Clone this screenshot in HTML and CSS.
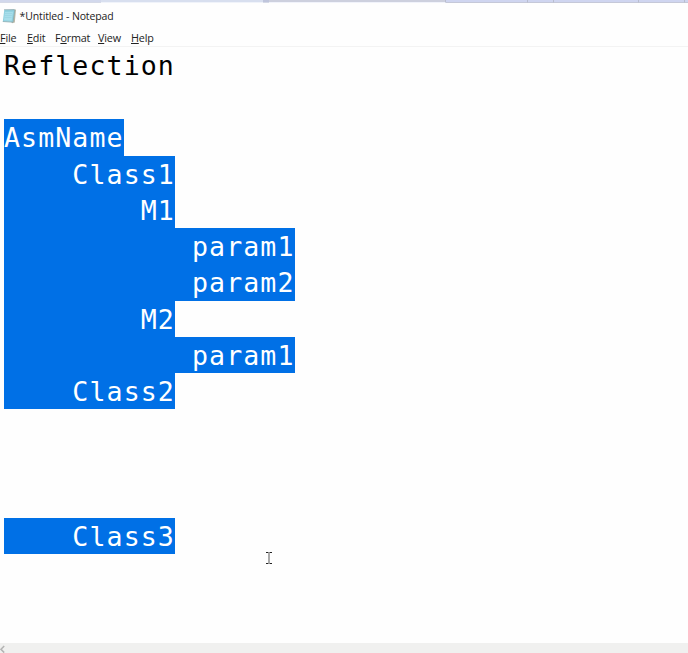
FILE: index.html
```
<!DOCTYPE html>
<html lang="en">
<head>
<meta charset="utf-8">
<title>*Untitled - Notepad</title>
<link rel="stylesheet" href="styles.css">
</head>
<body>
<div class="window">
  <div class="backdrop"><i class="tab soft"></i><i class="tab pale"></i><i class="tab gap"></i><i class="tab light"></i><i class="tab blue"></i><i class="tab blue short"></i><i class="tab blue wide"></i><i class="tab blue mid"></i><i class="tab blue rest"></i></div>
  <header class="titlebar">
    <svg class="app-icon" width="15" height="16" viewBox="0 0 15 16">
      <path d="M3 2.2 14 1.5 12.8 14.5 10 15.2Z" fill="#b9b7a6"/>
      <path d="M2.3 1.8 12.8 1.5 11 14 .8 13.5Z" fill="#8fd0df"/>
      <path d="M3 4 11 3.8 9.7 12.8 2 12.3Z" fill="#a7deeb"/>
      <path d="M3 5.5h7M2.8 7.5h7M2.5 9.5h7" stroke="#90cedc" stroke-width=".5"/>
      <path d="M2.5 1.7h10.3" stroke="#75868b" stroke-dasharray="1 1"/>
      <path d="M.8 13.5 11 14.2 12.8 2" fill="none" stroke="#8aa9ae" stroke-width=".8"/>
    </svg>
    <span class="title">*Untitled - Notepad</span>
  </header>
  <nav class="menu">
    <span class="item file"><u>F</u>ile</span>
    <span class="item edit"><u>E</u>dit</span>
    <span class="item format">F<u>o</u>rmat</span>
    <span class="item view"><u>V</u>iew</span>
    <span class="item help"><u>H</u>elp</span>
  </nav>
  <main class="editor">
    <div class="line">Reflection</div>
    <div class="line"></div>
    <div class="line"><span class="sel">AsmName</span></div>
    <div class="line"><span class="sel">    Class1</span></div>
    <div class="line"><span class="sel">        M1</span></div>
    <div class="line"><span class="sel">           param1</span></div>
    <div class="line"><span class="sel">           param2</span></div>
    <div class="line"><span class="sel">        M2</span></div>
    <div class="line"><span class="sel">           param1</span></div>
    <div class="line"><span class="sel">    Class2</span></div>
    <div class="line"></div>
    <div class="line"></div>
    <div class="line"></div>
    <div class="line"><span class="sel">    Class3</span></div>
  </main>
  <footer class="scrollbar"><svg width="6" height="9" viewBox="0 0 6 9"><path d="M4.2 1 1 4.3 4.2 7.6" fill="none" stroke="#b4b4b4" stroke-width="1.6"/></svg></footer>
  <svg class="cursor" width="8" height="14" viewBox="0 0 8 14"><path d="M4 1.5v11" stroke="#aaa" stroke-width="2"/><path d="M1 1.5h2.4M4.6 1.5h2.4M1 12.5h2.4M4.6 12.5h2.4" stroke="#222"/></svg>
</div>
</body>
</html>
```
FILE: styles.css
```
* { box-sizing: border-box; }
body { margin: 0; background: #fff; }
.window {
  position: relative;
  display: flex;
  flex-direction: column;
  width: 688px;
  height: 653px;
  overflow: hidden;
  background: #fefefe;
  color: #222;
  font-family: "Open Sans", "Noto Sans", sans-serif;
}
.backdrop { display: flex; flex: none; height: 3px; }
.tab { height: 3px; border-bottom: 1px solid #d5d9e6; border-right: 1px solid #b9bdce; background: #d2d8ec; }
.tab.soft { width: 101px; border-right: 0; }
.tab.pale { width: 162px; background: #d8dfef; border-bottom-color: #f0f3fa; border-right: 0; }
.tab.gap { width: 6px; background: #bfc5dc; border-right: 0; }
.tab.light { width: 177px; background: #cdd0de; border-bottom-color: #f1f3fb; }
.tab.blue { width: 82px; background: #cfd5f0; border-bottom-color: #c5c8d8; }
.tab.short { width: 26px; }
.tab.wide { width: 85px; }
.tab.mid { width: 46px; }
.tab.rest { width: auto; flex: 1; border-right: 0; }
.titlebar { display: flex; align-items: center; flex: none; height: 26px; padding-left: 2px; }
.app-icon { flex: none; margin-right: 2.5px; }
.title { font-size: 10.5px; line-height: 16px; letter-spacing: -.12px; white-space: nowrap; }
.menu { display: flex; align-items: center; flex: none; height: 18px; border-bottom: 1px solid #f3f3f3; font-size: 10.8px; line-height: 16px; letter-spacing: -.2px; }
.item { flex: none; white-space: nowrap; }
.item u { text-underline-offset: 1px; text-decoration-thickness: 1px; }
.file { width: 27px; }
.edit { width: 28px; }
.format { width: 43px; }
.view { width: 33px; }
.editor {
  flex: 1;
  min-height: 0;
  padding-left: 4px;
  color: #000;
  font-family: "DejaVu Sans Mono", monospace;
  font-size: 26.6px;
  letter-spacing: 1.08px;
  line-height: 38px;
}
.line { height: 36.22px; white-space: pre; }
.sel { display: inline-block; height: 36.22px; vertical-align: top; background: #0070e6; color: #fff; }
.scrollbar { display: flex; align-items: center; flex: none; height: 10px; background: #f0f0ef; padding-top: 3px; }
.cursor { position: absolute; left: 265px; top: 551px; }
```
